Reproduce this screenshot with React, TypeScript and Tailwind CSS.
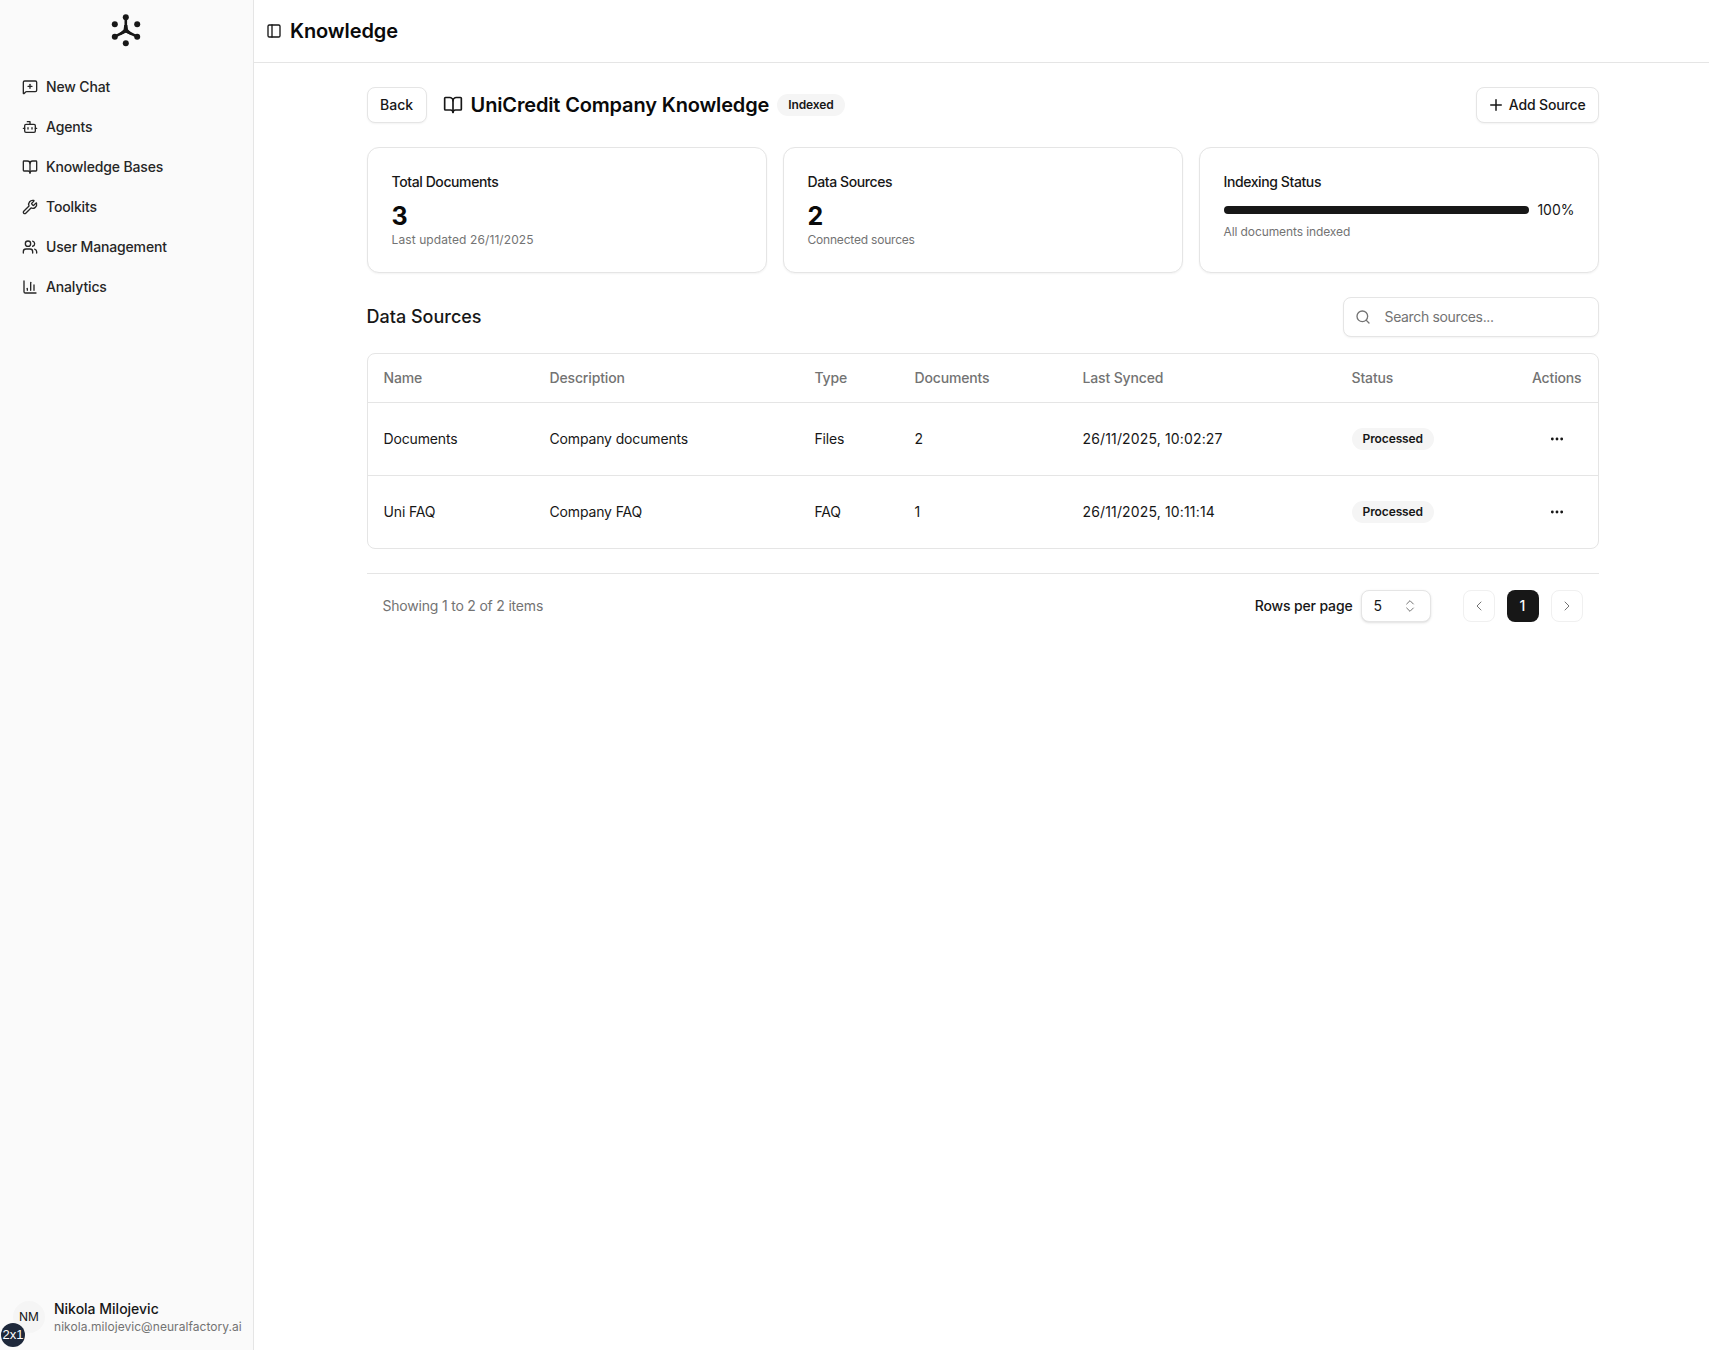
import { BookOpen, Bot, ChartColumn, ChevronLeft, ChevronRight, ChevronsUpDown, Ellipsis, MessageSquarePlus, PanelLeft, Plus, Search, Users, Wrench } from 'lucide-react'

const navItems = [
  { label: 'New Chat', icon: MessageSquarePlus },
  { label: 'Agents', icon: Bot },
  { label: 'Knowledge Bases', icon: BookOpen },
  { label: 'Toolkits', icon: Wrench },
  { label: 'User Management', icon: Users },
  { label: 'Analytics', icon: ChartColumn },
]

const sources = [
  { name: 'Documents', description: 'Company documents', type: 'Files', documents: 2, synced: '26/11/2025, 10:02:27' },
  { name: 'Uni FAQ', description: 'Company FAQ', type: 'FAQ', documents: 1, synced: '26/11/2025, 10:11:14' },
]

function Logo() {
  return (
    <svg width="32" height="34" viewBox="0 0 32 34" fill="#171717">
      <circle cx="14.8" cy="3.3" r="3" />
      <circle cx="3.8" cy="10.3" r="3" />
      <circle cx="26.2" cy="10.3" r="3" />
      <circle cx="14.8" cy="29.3" r="3" />
      <circle cx="3.8" cy="22.7" r="3" />
      <circle cx="26.2" cy="22.7" r="3" />
      <path d="M14.8 3.3V17M14.8 17L3.8 22.7M14.8 17l11.4 5.7" stroke="#171717" strokeWidth="2.6" strokeLinecap="round" fill="none" />
      <path d="M13.2 11h3.2l.6 4.6 4.2 4-1 1.6-5.4-2.6-5.4 2.6-1-1.6 4.2-4z" />
    </svg>
  )
}

function Sidebar() {
  return (
    <aside className="w-[254px] shrink-0 h-full flex flex-col bg-[#fafafa] border-r border-[#e5e5e5]">
      <div className="h-[62px] flex items-center justify-center">
        <Logo />
      </div>
      <nav className="mt-[5px] px-[14px] flex flex-col">
        {navItems.map((item) => (
          <div key={item.label} className="h-10 px-2 flex items-center gap-2 text-sm font-medium tracking-[-0.15px] text-[#262626]">
            <item.icon className="w-4 h-4" />
            <span>{item.label}</span>
          </div>
        ))}
      </nav>
      <div className="mt-auto pb-[15px] pl-[13px] flex items-center gap-[9px]">
        <div className="w-8 h-8 rounded-full bg-[#f5f5f5] flex items-center justify-center text-xs text-[#171717]">NM</div>
        <div className="flex flex-col">
          <span className="text-sm font-medium text-[#171717] leading-5">Nikola Milojevic</span>
          <span className="text-xs tracking-[0.05px] text-[#737373] leading-4">nikola.milojevic@neuralfactory.ai</span>
        </div>
      </div>
    </aside>
  )
}

function StatCard({ title, value, note, noteClass }: { title: string; value: string; note: string; noteClass: string }) {
  return (
    <div className="rounded-xl border border-[#e5e5e5] bg-white p-6 shadow-xs">
      <div className="text-sm font-medium tracking-[-0.4px] text-[#171717]">{title}</div>
      <div className="mt-2 text-[25px] leading-8 font-bold text-[#0a0a0a]">{value}</div>
      <div className={`text-xs text-[#737373] ${noteClass}`}>{note}</div>
    </div>
  )
}

export default function App() {
  return (
    <div className="relative w-full h-[1350px] flex bg-white overflow-hidden font-['Inter',sans-serif]">
      <Sidebar />
      <main className="flex-1 min-w-0">
        <header className="h-[63px] pl-3 flex items-center gap-2 border-b border-[#e5e5e5]">
          <PanelLeft className="w-4 h-4 text-[#171717]" />
          <h1 className="text-xl font-semibold tracking-[-0.1px] text-[#0a0a0a]">Knowledge</h1>
        </header>
        <div className="pl-[2px]">
          <div className="max-w-[1232px] mx-auto pt-6">
            <div className="flex items-center">
              <button className="h-9 px-[12.5px] rounded-lg border border-[#e5e5e5] bg-white text-sm font-medium text-[#171717] shadow-xs">Back</button>
              <BookOpen className="ml-4 w-5 h-5 text-[#171717]" />
              <h2 className="ml-2 text-xl font-semibold tracking-[-0.15px] text-[#0a0a0a]">UniCredit Company Knowledge</h2>
              <span className="ml-2 h-[22px] px-[11px] rounded-full bg-[#f5f5f5] flex items-center text-xs font-semibold tracking-[-0.1px] text-[#171717]">Indexed</span>
              <button className="ml-auto h-9 pl-[10px] pr-3 rounded-lg border border-[#e5e5e5] bg-white flex items-center gap-1 text-sm font-medium tracking-[-0.15px] text-[#171717] shadow-xs">
                <Plus className="w-[18px] h-[18px]" />
                Add Source
              </button>
            </div>

            <div className="mt-6 grid grid-cols-3 gap-4">
              <StatCard title="Total Documents" value="3" note="Last updated 26/11/2025" noteClass="tracking-[0.1px]" />
              <StatCard title="Data Sources" value="2" note="Connected sources" noteClass="tracking-[-0.2px]" />
              <div className="rounded-xl border border-[#e5e5e5] bg-white p-6 shadow-xs">
                <div className="text-sm font-medium tracking-[-0.4px] text-[#171717]">Indexing Status</div>
                <div className="mt-2 -mr-px flex items-center gap-2">
                  <div className="flex-1 h-2 rounded-full bg-[#171717]" />
                  <span className="text-sm text-[#171717]">100%</span>
                </div>
                <div className="mt-1 text-xs tracking-[-0.1px] text-[#737373]">All documents indexed</div>
              </div>
            </div>

            <div className="mt-6 flex items-center justify-between">
              <h3 className="text-lg font-medium text-[#171717]">Data Sources</h3>
              <div className="w-64 h-10 px-[11px] rounded-lg border border-[#e5e5e5] bg-white flex items-center gap-[14px] shadow-xs">
                <Search className="w-4 h-4 text-[#737373]" />
                <span className="text-sm tracking-[-0.35px] text-[#737373]">Search sources...</span>
              </div>
            </div>

            <div className="mt-4 rounded-lg border border-[#e5e5e5] overflow-hidden">
              <table className="w-full table-fixed text-sm tracking-[-0.15px] text-[#171717]">
                <thead>
                  <tr className="h-12 border-b border-[#e5e5e5] text-left text-[#737373]">
                    <th className="w-[166px] px-4 font-medium">Name</th>
                    <th className="w-[265px] px-4 font-medium">Description</th>
                    <th className="w-[100px] px-4 font-medium">Type</th>
                    <th className="w-[168px] px-4 font-medium">Documents</th>
                    <th className="w-[269px] px-4 font-medium">Last Synced</th>
                    <th className="w-[180px] px-4 font-medium">Status</th>
                    <th className="px-4 font-medium text-right">Actions</th>
                  </tr>
                </thead>
                <tbody>
                  {sources.map((source, index) => (
                    <tr key={source.name} className={index === 0 ? 'h-[73px] border-b border-[#e5e5e5]' : 'h-[73px]'}>
                      <td className="px-4">{source.name}</td>
                      <td className="px-4">{source.description}</td>
                      <td className="px-4">{source.type}</td>
                      <td className="px-4">{source.documents}</td>
                      <td className="px-4 tracking-[0.15px]">{source.synced}</td>
                      <td className="px-4">
                        <span className="inline-flex h-[22px] px-[11px] items-center rounded-full bg-[#f5f5f5] text-xs font-semibold tracking-[-0.1px]">Processed</span>
                      </td>
                      <td className="px-4">
                        <Ellipsis className="mx-auto w-4 h-4" strokeWidth={2.25} />
                      </td>
                    </tr>
                  ))}
                </tbody>
              </table>
            </div>

            <div className="mt-6 px-4 pt-4 border-t border-[#e5e5e5] flex items-center">
              <span className="text-sm tracking-[-0.2px] text-[#737373]">Showing 1 to 2 of 2 items</span>
              <span className="ml-auto text-sm font-medium tracking-[-0.15px] text-[#171717]">Rows per page</span>
              <div className="ml-2 w-[70px] h-8 px-3 rounded-lg border border-[#e5e5e5] bg-white flex items-center justify-between text-sm text-[#171717] shadow-sm">
                5
                <ChevronsUpDown className="w-4 h-4 text-[#737373]" strokeWidth={1.5} />
              </div>
              <div className="ml-8 flex items-center gap-3">
                <div className="w-8 h-8 rounded-lg border border-[#f0f0f0] flex items-center justify-center text-[#737373]"><ChevronLeft className="w-4 h-4" strokeWidth={1.5} /></div>
                <div className="w-8 h-8 rounded-lg bg-[#171717] flex items-center justify-center text-sm font-medium text-[#fafafa]">1</div>
                <div className="w-8 h-8 rounded-lg border border-[#f0f0f0] flex items-center justify-center text-[#737373]"><ChevronRight className="w-4 h-4" strokeWidth={1.5} /></div>
              </div>
            </div>
          </div>
        </div>
      </main>
      <div className="absolute left-[1px] top-[1323px] w-6 h-6 rounded-full bg-[#1e293b] flex items-center justify-center font-['Liberation_Sans',sans-serif] text-[13px] text-white">2x1</div>
    </div>
  )
}
